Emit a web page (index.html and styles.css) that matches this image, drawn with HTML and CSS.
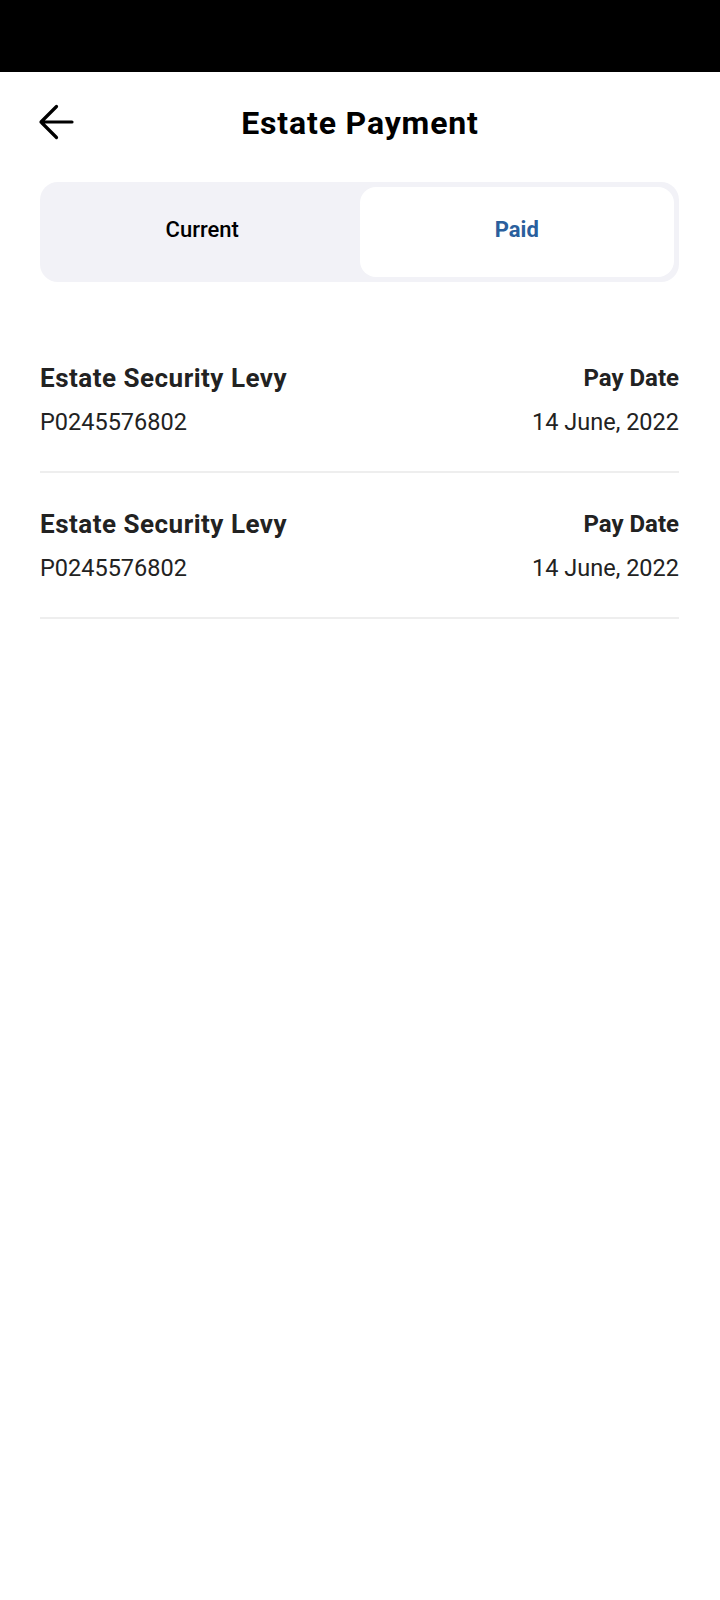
FILE: index.html
```html
<!DOCTYPE html>
<html lang="en">
<head>
<meta charset="utf-8">
<title>Estate Payment</title>
<link rel="stylesheet" href="styles.css">
</head>
<body>
<div class="statusbar"></div>
<header class="header">
  <button class="back" aria-label="Back">
    <svg width="36" height="36" viewBox="0 0 36 36" fill="none" stroke="#000" stroke-width="3.2" stroke-linecap="round" stroke-linejoin="round">
      <path d="M3 18H34M18.5 2.5L3 18l15.5 15.5"/>
    </svg>
  </button>
  <h1 class="title">Estate Payment</h1>
  <span class="spacer"></span>
</header>
<div class="tabs">
  <div class="tab">Current</div>
  <div class="tab tab-active">Paid</div>
</div>
<ul class="list">
  <li class="row">
    <div class="col">
      <div class="name">Estate Security Levy</div>
      <div class="ref">P0245576802</div>
    </div>
    <div class="col col-right">
      <div class="label">Pay Date</div>
      <div class="date">14 June, 2022</div>
    </div>
  </li>
  <li class="row">
    <div class="col">
      <div class="name">Estate Security Levy</div>
      <div class="ref">P0245576802</div>
    </div>
    <div class="col col-right">
      <div class="label">Pay Date</div>
      <div class="date">14 June, 2022</div>
    </div>
  </li>
</ul>
</body>
</html>
```
FILE: styles.css
```css
* { box-sizing: border-box; }
html, body { margin: 0; padding: 0; background: #fff; }
body {
  width: 720px;
  font-family: Roboto, "Liberation Sans", sans-serif;
  color: #222;
}
.statusbar { height: 72px; background: #000; }
.header {
  height: 100px;
  padding: 0 38px;
  display: grid;
  grid-template-columns: 1fr auto 1fr;
  align-items: center;
}
.back {
  border: 0; background: none; padding: 0; margin: 0;
  width: 36px; height: 36px; display: flex;
}
.title {
  margin: 0;
  font-size: 32px;
  font-weight: 700;
  letter-spacing: 0.85px;
  color: #000;
  line-height: 38px;
  padding-top: 2px;
}
.tabs {
  margin: 10px 41px 0 40px;
  height: 100px;
  padding: 5px;
  background: #f2f2f7;
  border-radius: 18px;
  display: flex;
}
.tab {
  flex: 1;
  display: flex;
  align-items: center;
  justify-content: center;
  font-size: 22px;
  font-weight: 500;
  color: #000;
  border-radius: 16px;
  padding-bottom: 6px;
}
.tab-active { background: #fff; color: #2a5f9d; font-weight: 700; }
.list { list-style: none; margin: 45px 41px 0 40px; padding: 0; }
.row {
  display: flex;
  justify-content: space-between;
  padding: 35px 0 34px;
  border-bottom: 2px solid #eeeeee;
}
.col { display: flex; flex-direction: column; gap: 13px; }
.col-right { align-items: flex-end; }
.name { font-size: 26px; font-weight: 700; letter-spacing: 0.5px; line-height: 32px; color: #222; }
.ref { font-size: 23.5px; line-height: 30px; color: #222; }
.label { font-size: 24px; font-weight: 700; line-height: 32px; color: #222; }
.date { font-size: 23.5px; line-height: 30px; color: #222; }
```
